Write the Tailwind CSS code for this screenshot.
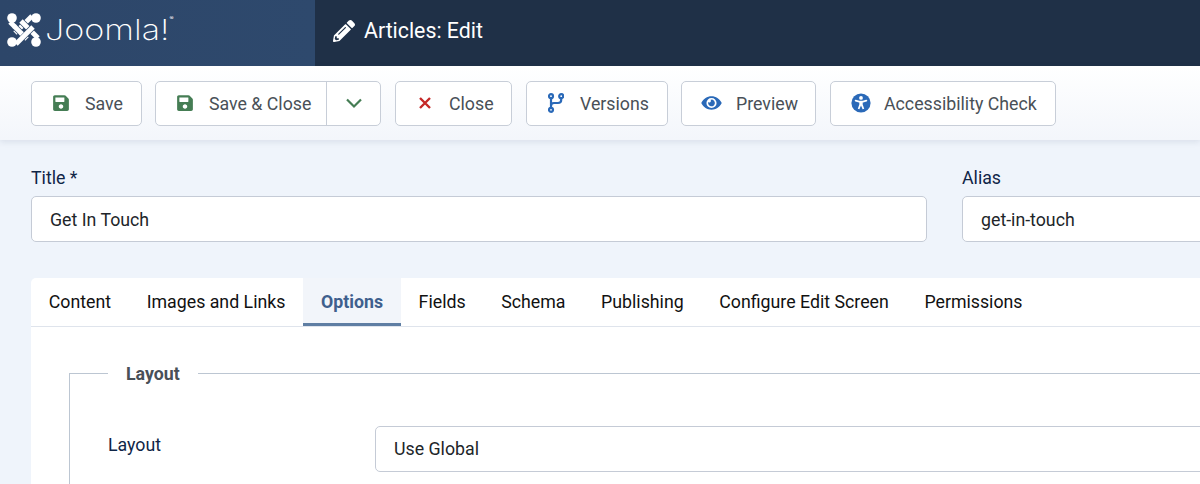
<!DOCTYPE html>
<html>
<head>
    <title>Articles: Edit</title>
    <script src="https://cdn.jsdelivr.net/npm/@tailwindcss/browser@4"></script>
</head>
<body class="bg-[#eff4fb] font-['Roboto',sans-serif] text-[17.75px] text-[#495057]">
    <div class="w-[1200px] h-[484px] overflow-hidden">
        <!-- Header -->
        <header class="flex h-[66px] bg-[#1f3047] text-white">
            <div class="w-[315px] flex items-center gap-[4px] pl-[7px] pb-[7px] bg-gradient-to-r from-[#2d4669] to-[#2e496d]">
                <svg class="w-[34px] h-[34px]" viewBox="0 0 34 34" fill="none" stroke-linecap="butt">
                    <g>
                        <path d="M3 9 L20 26" stroke="#fff" stroke-width="4.8"/>
                        <path d="M25 3 L8 20" stroke="#2d4669" stroke-width="6.2"/><path d="M25 3 L8 20" stroke="#fff" stroke-width="4.8"/>
                        <path d="M31 25 L14 8" stroke="#2d4669" stroke-width="6.2"/><path d="M31 25 L14 8" stroke="#fff" stroke-width="4.8"/>
                        <path d="M9 31 L26 14" stroke="#2d4669" stroke-width="6.2"/><path d="M9 31 L26 14" stroke="#fff" stroke-width="4.8"/>
                        <path d="M8 14 L14 20" stroke="#2d4669" stroke-width="6.2"/><path d="M7 13 L15 21" stroke="#fff" stroke-width="4.8"/>
                    </g>
                    <g fill="#fff">
                        <circle cx="5" cy="5" r="4.8"/><circle cx="29" cy="5" r="4.8"/>
                        <circle cx="5" cy="29" r="4.8"/><circle cx="29" cy="29" r="4.8"/>
                    </g>
                </svg>
                <span class="whitespace-nowrap font-['Inter',sans-serif] font-[250] text-[28px] leading-none origin-left scale-x-[1.22]">Joomla!<span class="align-top text-[5px] font-normal">®</span></span>
            </div>
            <div class="flex items-center gap-[9px] pl-[18px] pb-[5px]">
                <svg class="w-[22px] h-[22px]" viewBox="0 0 512 512" fill="#fff"><path d="M497.9 142.1l-46.1 46.1c-4.7 4.7-12.3 4.7-17 0l-111-111c-4.7-4.7-4.7-12.3 0-17l46.1-46.1c18.7-18.7 49.1-18.7 67.9 0l60.1 60.1c18.8 18.7 18.8 49.1 0 67.9zM284.2 99.8L21.6 362.4.4 483.9c-2.9 16.4 11.4 30.6 27.8 27.8l121.5-21.3 262.6-262.6c4.7-4.7 4.7-12.3 0-17l-111-111c-4.8-4.7-12.4-4.7-17.1 0zM124.1 339.9c-5.5-5.5-5.5-14.3 0-19.8l154-154c5.5-5.5 14.3-5.5 19.8 0s5.5 14.3 0 19.8l-154 154c-5.5 5.5-14.3 5.5-19.8 0zM88 424h48v36.3l-64.5 11.3-31.1-31.1L51.7 376H88v48z"/></svg>
                <span class="text-[21.3px]">Articles: Edit</span>
            </div>
        </header>

        <!-- Toolbar -->
        <div class="h-[74px] flex items-center gap-[13px] pl-[31px] bg-gradient-to-b from-white to-[#f3f6fb] shadow-[0_2px_6px_rgba(30,50,90,0.1)]">
            <button class="h-[45px] w-[111px] flex items-center gap-[16px] pl-[21px] bg-white border border-[#c8ced8] rounded-[5px]">
                <svg class="w-[16px] h-[18px]" viewBox="0 0 448 512" fill="#457d54"><path d="M433.941 129.941l-83.882-83.882A48 48 0 0 0 316.118 32H48C21.49 32 0 53.49 0 80v352c0 26.51 21.49 48 48 48h352c26.51 0 48-21.49 48-48V163.882a48 48 0 0 0-14.059-33.941zM224 416c-35.346 0-64-28.654-64-64 0-35.346 28.654-64 64-64s64 28.654 64 64c0 35.346-28.654 64-64 64zm96-304.52V212c0 6.627-5.373 12-12 12H76c-6.627 0-12-5.373-12-12V108c0-6.627 5.373-12 12-12h228.52c3.183 0 6.235 1.264 8.485 3.515l3.48 3.48A11.996 11.996 0 0 1 320 111.48z"/></svg>
                <span class="pt-[2px]">Save</span>
            </button>
            <div class="h-[45px] w-[226px] flex bg-white border border-[#c8ced8] rounded-[5px]">
                <button class="w-[171px] flex items-center gap-[16px] pl-[21px] border-r border-[#c8ced8]">
                    <svg class="w-[16px] h-[18px]" viewBox="0 0 448 512" fill="#457d54"><path d="M433.941 129.941l-83.882-83.882A48 48 0 0 0 316.118 32H48C21.49 32 0 53.49 0 80v352c0 26.51 21.49 48 48 48h352c26.51 0 48-21.49 48-48V163.882a48 48 0 0 0-14.059-33.941zM224 416c-35.346 0-64-28.654-64-64 0-35.346 28.654-64 64-64s64 28.654 64 64c0 35.346-28.654 64-64 64zm96-304.52V212c0 6.627-5.373 12-12 12H76c-6.627 0-12-5.373-12-12V108c0-6.627 5.373-12 12-12h228.52c3.183 0 6.235 1.264 8.485 3.515l3.48 3.48A11.996 11.996 0 0 1 320 111.48z"/></svg>
                    <span class="pt-[2px]">Save &amp; Close</span>
                </button>
                <button class="flex-1 flex items-center justify-center">
                    <svg class="w-[18px] h-[12px]" viewBox="0 0 18 12" fill="none" stroke="#457d54" stroke-width="2.2"><path d="M2 2.5 L9 9.5 L16 2.5"/></svg>
                </button>
            </div>
            <button class="ml-px h-[45px] w-[117px] flex items-center gap-[16px] pl-[21px] bg-white border border-[#c8ced8] rounded-[5px]">
                <svg class="w-[16px] h-[18px]" viewBox="0 0 16 18" fill="none" stroke="#c52827" stroke-width="2.4"><path d="M3 4 L13 14 M13 4 L3 14"/></svg>
                <span class="pt-[2px]">Close</span>
            </button>
            <button class="ml-px h-[45px] w-[142px] flex items-center gap-[16px] pl-[21px] bg-white border border-[#c8ced8] rounded-[5px]">
                <svg class="w-[16px] h-[20px]" viewBox="0 0 16 20" fill="none" stroke="#2a69b8" stroke-width="2.2"><circle cx="3" cy="3.2" r="2"/><circle cx="3" cy="16.8" r="2"/><circle cx="13.2" cy="3.2" r="2"/><path d="M3 5.2 V14.8 M13.2 5.2 V7 Q13.2 10 10 10 H6 Q3 10 3 13"/></svg>
                <span class="pt-[2px]">Versions</span>
            </button>
            <button class="h-[45px] w-[135px] flex items-center gap-[14px] pl-[19px] bg-white border border-[#c8ced8] rounded-[5px]">
                <svg class="w-[21px] h-[18px]" viewBox="0 0 576 512" fill="#2a69b8"><path d="M572.52 241.4C518.29 135.59 410.93 64 288 64S57.68 135.64 3.48 241.41a32.35 32.35 0 0 0 0 29.19C57.71 376.41 165.07 448 288 448s230.32-71.64 284.52-177.41a32.35 32.35 0 0 0 0-29.19zM288 400a144 144 0 1 1 144-144 143.93 143.93 0 0 1-144 144zm0-240a95.31 95.31 0 0 0-25.31 3.79 47.85 47.85 0 0 1-66.9 66.9A95.78 95.78 0 1 0 288 160z"/></svg>
                <span class="pt-[2px]">Preview</span>
            </button>
            <button class="ml-px h-[45px] w-[226px] flex items-center gap-[13px] pl-[20px] bg-white border border-[#c8ced8] rounded-[5px]">
                <svg class="w-[20px] h-[20px]" viewBox="0 0 20 20"><circle cx="10" cy="10" r="9.6" fill="#2a69b8"/><circle cx="10" cy="4.9" r="1.9" fill="#fff"/><path d="M4.6 7.6 L8 8.6 H12 L15.4 7.6" fill="none" stroke="#fff" stroke-width="1.7" stroke-linecap="round"/><path d="M8.3 8 H11.7 V11.6 L13.2 15.8 L11.6 16.2 L10 12.4 L8.4 16.2 L6.8 15.8 L8.3 11.6 Z" fill="#fff"/></svg>
                <span class="pt-[2px]">Accessibility Check</span>
            </button>
        </div>

        <!-- Title and alias -->
        <div class="flex gap-[35px] pl-[31px] pt-[25px]">
            <div class="w-[896px] shrink-0">
                <label class="block h-[31px] leading-[26px] text-[#0f2547]">Title *</label>
                <input class="w-full h-[46px] px-[18px] pt-[2px] text-[#212529] bg-white border border-[#c5cbd6] rounded-[5px]" value="Get In Touch">
            </div>
            <div class="w-[400px] shrink-0">
                <label class="block h-[31px] leading-[26px] text-[#0f2547]">Alias</label>
                <input class="w-full h-[46px] px-[18px] pt-[2px] text-[#212529] bg-white border border-[#c5cbd6] rounded-[5px]" value="get-in-touch">
            </div>
        </div>

        <!-- Tabs card -->
        <div class="ml-[31px] mt-[36px] w-[1300px] h-[300px] bg-white rounded-t-[5px]">
            <div class="flex h-[49px] border-b border-[#dfe4ec] text-[#111]">
                <div class="px-[17.8px] h-[48px] leading-[49px]">Content</div>
                <div class="px-[17.8px] h-[48px] leading-[49px]">Images and Links</div>
                <div class="px-[17.8px] h-[48px] leading-[49px] font-bold text-[#3f5f8d] bg-[#f2f5fa] border-b-[3px] border-[#5f7ea3]">Options</div>
                <div class="px-[17.8px] h-[48px] leading-[49px]">Fields</div>
                <div class="px-[17.8px] h-[48px] leading-[49px]">Schema</div>
                <div class="px-[17.8px] h-[48px] leading-[49px]">Publishing</div>
                <div class="px-[17.8px] h-[48px] leading-[49px]">Configure Edit Screen</div>
                <div class="px-[17.8px] h-[48px] leading-[49px]">Permissions</div>
            </div>
            <fieldset class="ml-[38px] mt-[32px] pl-[38px] border border-[#bcc6d2] h-[300px]">
                <legend class="px-[18px] pt-[2px] font-bold text-[#495057] leading-[26px]">Layout</legend>
                <div class="flex pt-[39px]">
                    <label class="w-[267px] shrink-0 pt-[6px] text-[#0f2547]">Layout</label>
                    <div class="w-[900px] shrink-0 h-[46px] leading-[44px] px-[18px] text-[#212529] border border-[#c5cbd6] rounded-[5px]">Use Global</div>
                </div>
            </fieldset>
        </div>
    </div>
</body>
</html>
